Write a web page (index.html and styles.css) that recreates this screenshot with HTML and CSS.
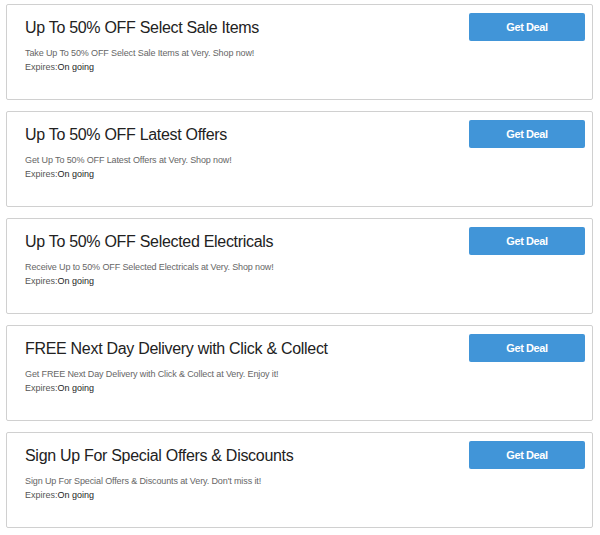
FILE: index.html
```html
<!DOCTYPE html>
<html>
<head>
<meta charset="utf-8">
<link rel="stylesheet" href="styles.css">
</head>
<body>
<div class="list">
  <div class="card">
    <div class="info">
      <h2 class="title">Up To 50% OFF Select Sale Items</h2>
      <p class="desc">Take Up To 50% OFF Select Sale Items at Very. Shop now!</p>
      <p class="exp">Expires:<span>On going</span></p>
    </div>
    <a class="btn">Get Deal</a>
  </div>
  <div class="card">
    <div class="info">
      <h2 class="title">Up To 50% OFF Latest Offers</h2>
      <p class="desc">Get Up To 50% OFF Latest Offers at Very. Shop now!</p>
      <p class="exp">Expires:<span>On going</span></p>
    </div>
    <a class="btn">Get Deal</a>
  </div>
  <div class="card">
    <div class="info">
      <h2 class="title">Up To 50% OFF Selected Electricals</h2>
      <p class="desc">Receive Up to 50% OFF Selected Electricals at Very. Shop now!</p>
      <p class="exp">Expires:<span>On going</span></p>
    </div>
    <a class="btn">Get Deal</a>
  </div>
  <div class="card">
    <div class="info">
      <h2 class="title">FREE Next Day Delivery with Click &amp; Collect</h2>
      <p class="desc">Get FREE Next Day Delivery with Click &amp; Collect at Very. Enjoy it!</p>
      <p class="exp">Expires:<span>On going</span></p>
    </div>
    <a class="btn">Get Deal</a>
  </div>
  <div class="card">
    <div class="info">
      <h2 class="title">Sign Up For Special Offers &amp; Discounts</h2>
      <p class="desc">Sign Up For Special Offers &amp; Discounts at Very. Don't miss it!</p>
      <p class="exp">Expires:<span>On going</span></p>
    </div>
    <a class="btn">Get Deal</a>
  </div>
</div>
</body>
</html>
```
FILE: styles.css
```css
html, body {
  margin: 0;
  padding: 0;
  background: #fff;
  font-family: "Liberation Sans", Arial, sans-serif;
}
.list {
  padding: 4px 0 0 6px;
  display: flex;
  flex-direction: column;
  gap: 11px;
}
.card {
  box-sizing: border-box;
  width: 587px;
  height: 96px;
  border: 1px solid #d0d0d0;
  border-radius: 2px;
  display: flex;
  justify-content: space-between;
  align-items: flex-start;
  padding: 8px 7px 0 18px;
}
.info {
  padding-top: 5px;
}
.title {
  margin: 0;
  font-size: 16px;
  line-height: 20px;
  font-weight: normal;
  letter-spacing: -0.3px;
  color: #222;
}
.desc {
  margin: 9px 0 0;
  font-size: 9px;
  line-height: 12px;
  letter-spacing: -0.12px;
  color: #666;
}
.exp {
  margin: 2px 0 0;
  font-size: 9px;
  line-height: 12px;
  color: #555;
}
.exp span {
  color: #1e1e1e;
}
.btn {
  width: 116px;
  height: 28px;
  background: #4195d8;
  border-radius: 2px;
  color: #fff;
  font-size: 11px;
  font-weight: bold;
  letter-spacing: -0.4px;
  line-height: 28px;
  text-align: center;
  box-sizing: border-box;
}
```
